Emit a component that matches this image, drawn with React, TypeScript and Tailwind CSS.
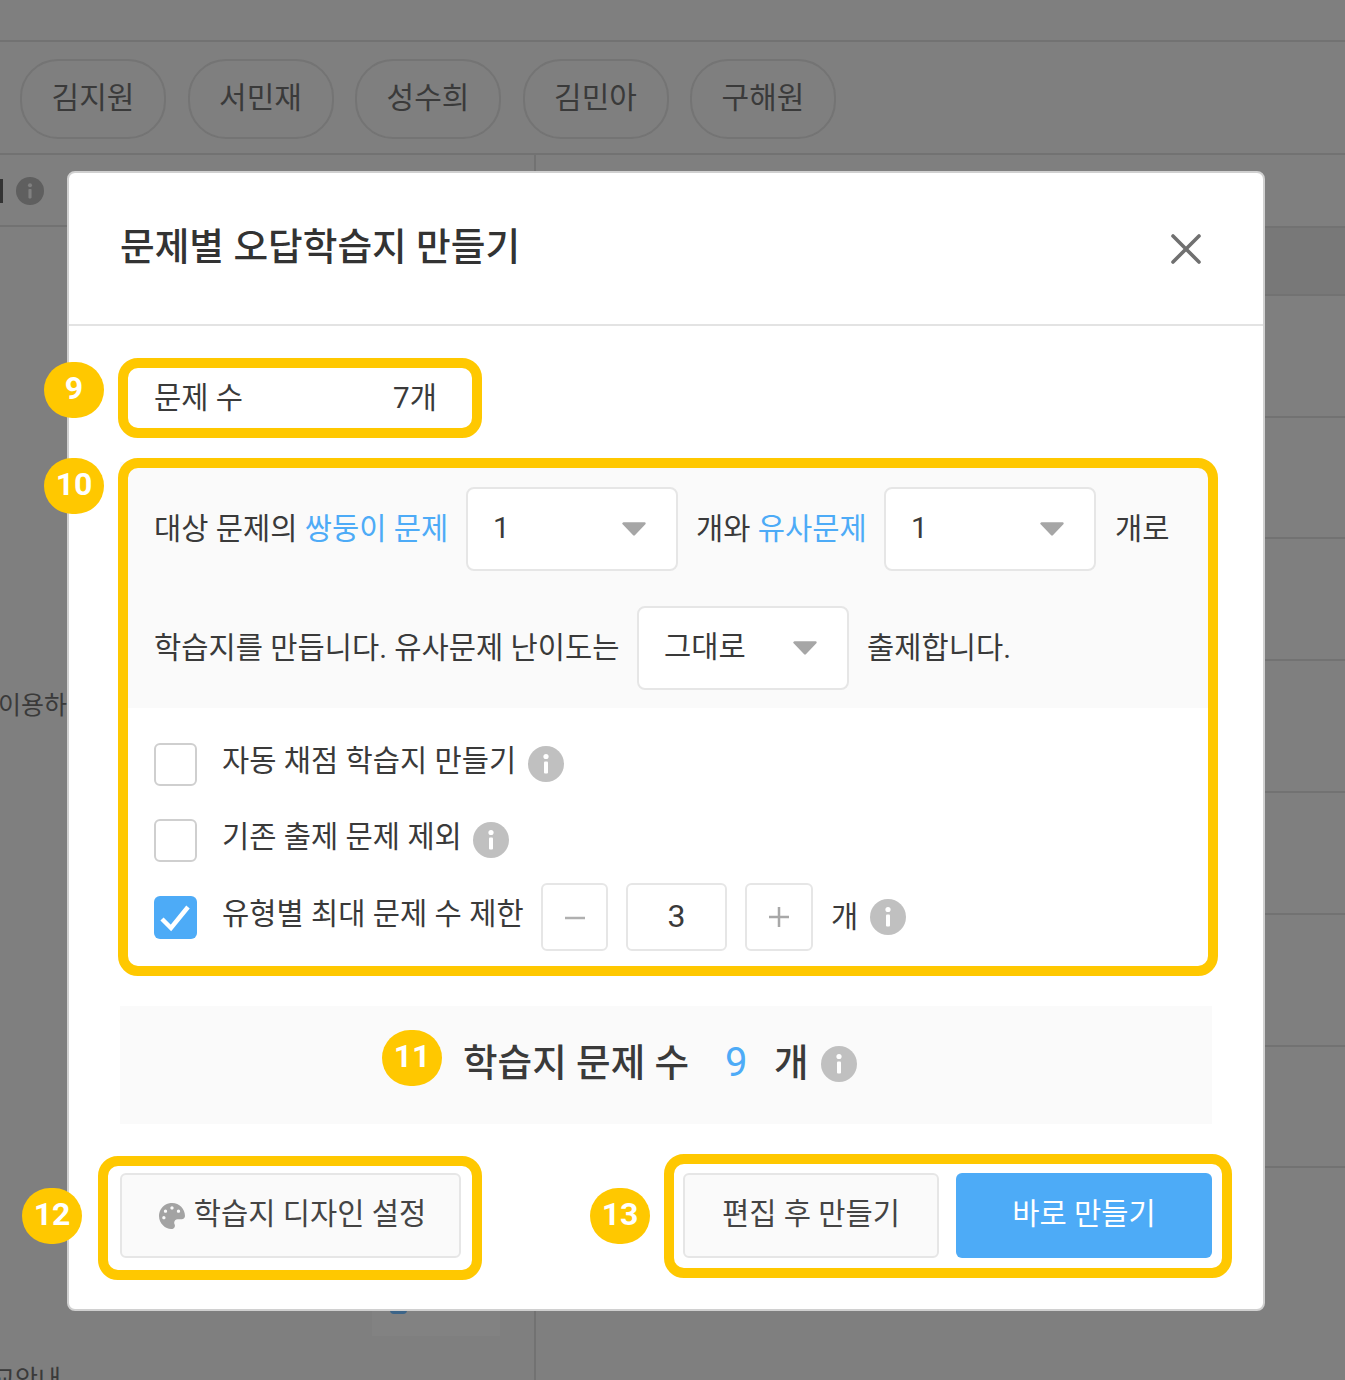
import React from "react";
import { FaPalette } from "react-icons/fa";

const Info = ({ className = "" }: { className?: string }) => (
  <svg viewBox="0 0 36 36" className={`w-[36px] h-[36px] shrink-0 ${className}`}>
    <circle cx="18" cy="18" r="18" fill="#c0c0c0" />
    <circle cx="18" cy="10.5" r="2.6" fill="#fff" />
    <rect x="16" y="15.5" width="4" height="12" rx="1" fill="#fff" />
  </svg>
);

const Caret = () => (
  <svg viewBox="0 0 26 14" className="w-[26px] h-[14px]">
    <path d="M2.5 1.5h21L13 12.5z" fill="#a6a6a6" stroke="#a6a6a6" strokeWidth="2.4" strokeLinejoin="round" />
  </svg>
);

const Select = ({ value }: { value: string }) => (
  <div className="w-[212px] h-[84px] bg-white border-2 border-[#e6e6e6] rounded-[8px] flex items-center justify-between pl-[25px] pr-[29px] text-[#3a3a3a] shrink-0">
    <span className="pb-[2px]">{value}</span>
    <Caret />
  </div>
);

const Check = ({ checked = false }: { checked?: boolean }) =>
  checked ? (
    <div className="w-[43px] h-[43px] rounded-[6px] bg-[#4dabf7] flex items-center justify-center shrink-0">
      <svg viewBox="0 0 43 43" className="w-[43px] h-[43px]">
        <path d="M8 23l9 9L34 11" fill="none" stroke="#fff" strokeWidth="4.5" />
      </svg>
    </div>
  ) : (
    <div className="w-[43px] h-[43px] rounded-[6px] bg-white border-2 border-[#cfcfcf] shrink-0" />
  );

const Badge = ({ n, className }: { n: string; className: string }) => (
  <div className={`absolute w-[60px] h-[56px] rounded-full bg-[#ffc800] text-white text-[32px] font-bold flex items-center justify-center pb-[4px] ${className}`}>
    {n}
  </div>
);

const Frame = ({ className }: { className: string }) => (
  <div className={`absolute border-[10px] border-[#ffc800] rounded-[20px] pointer-events-none ${className}`} />
);

const chips = ["김지원", "서민재", "성수희", "김민아", "구해원"];
const rows = [
  "h-[73px] border-b-2",
  "h-[68px] border-b-2 bg-[#787878]",
  "h-[122px] border-b-2",
  "h-[121px] border-b-2",
  "h-[122px] border-b-2",
  "h-[132px] border-b-2",
  "h-[122px] border-b-2",
  "h-[132px] border-b-2",
  "h-[121px] border-b-2",
];

export default function App() {
  return (
    <div className="relative w-[1345px] h-[1380px] overflow-hidden bg-[#7f7f7f] font-['Roboto','Noto_Sans_CJK_KR',sans-serif] text-[#3a3a3a]">
      {/* dimmed page */}
      <div className="h-[42px] border-b-2 border-[#727272]" />
      <div className="h-[113px] border-b-2 border-[#727272] flex items-start gap-[21.5px] pl-[20px] pt-[17px]">
        {chips.map((c) => (
          <div key={c} className="w-[146px] h-[80px] rounded-[38px] border-2 border-[#747474] flex items-center justify-center pb-[3px] text-[30px] text-[#3a3a3a]">
            {c}
          </div>
        ))}
      </div>
      <div className="flex">
        <div className="w-[536px] h-[1225px] border-r-2 border-[#727272] relative">
          <div className="h-[72px] border-b-2 border-[#727272] flex items-center pt-[2px]">
            <div className="w-[3px] h-[24px] bg-[#333]" />
            <svg viewBox="0 0 36 36" className="w-[28px] h-[28px] ml-[13px]">
              <circle cx="18" cy="18" r="18" fill="#5f5f5f" />
              <circle cx="18" cy="10.5" r="2.6" fill="#808080" />
              <rect x="16" y="15.5" width="4" height="12" rx="1" fill="#808080" />
            </svg>
          </div>
          <div className="mt-[462px] -ml-[2px] text-[25px] text-[#3a3a3a] leading-[34px]">이용하</div>
          <div className="absolute left-[372px] top-[1155px] w-[128px] h-[26px] bg-[#828282]">
            <div className="ml-[18px] w-[17px] h-[4px] rounded-b-full bg-[#3c6488]" />
          </div>
          <div className="absolute left-[-8px] top-[1208px] text-[25px] text-[#3a3a3a] leading-[34px]">교안내</div>
        </div>
        <div className="flex-1">
          {rows.map((r, i) => (
            <div key={i} className={`${r} border-[#727272]`} />
          ))}
        </div>
      </div>

      {/* modal */}
      <div className="absolute left-[67px] top-[171px] w-[1198px] h-[1140px] bg-white rounded-[8px] border-2 border-[#d0d0d0] text-[29.6px]">
        <div className="h-[153px] border-b-2 border-[#e3e3e3] flex items-start justify-between pl-[51px] pr-[61px]">
          <h1 className="text-[37.7px] font-medium text-[#333] mt-[46px] leading-[56px]">문제별 오답학습지 만들기</h1>
          <svg viewBox="0 0 32 32" className="w-[32px] h-[32px] mt-[60px]">
            <path d="M3 3l26 26M29 3L3 29" stroke="#707070" strokeWidth="3.6" strokeLinecap="round" />
          </svg>
        </div>

        <div className="pl-[51px] pr-[51px]">
          <div className="flex h-[136px] items-center pl-[34px] pt-[8px]">
            <span className="w-[239px]">문제 수</span>
            <span>7개</span>
          </div>

          <div className="bg-[#fafafa] pl-[34px] pt-[25px] h-[246px] flex flex-col gap-[35px]">
            <div className="flex items-center h-[84px]">
              <span className="w-[312px]">
                대상 문제의 <span className="text-[#4dabf7]">쌍둥이 문제</span>
              </span>
              <Select value="1" />
              <span className="ml-[18px] w-[188px]">
                개와 <span className="text-[#4dabf7]">유사문제</span>
              </span>
              <Select value="1" />
              <span className="ml-[19px]">개로</span>
            </div>
            <div className="flex items-center h-[84px]">
              <span className="w-[483px]">학습지를 만듭니다. 유사문제 난이도는</span>
              <Select value="그대로" />
              <span className="ml-[18px]">출제합니다.</span>
            </div>
          </div>

          <div className="pl-[34px] pt-[35px] flex flex-col">
            <div className="flex items-center h-[42px] mb-[34px]">
              <Check />
              <span className="ml-[25px] pb-[5px]">자동 채점 학습지 만들기</span>
              <Info className="ml-[12px]" />
            </div>
            <div className="flex items-center h-[42px] mb-[22px]">
              <Check />
              <span className="ml-[25px] pb-[5px]">기존 출제 문제 제외</span>
              <Info className="ml-[11px]" />
            </div>
            <div className="flex items-center h-[68px]">
              <Check checked />
              <span className="ml-[25px] w-[319px] pb-[6px]">유형별 최대 문제 수 제한</span>
              <div className="w-[67px] h-[68px] border-2 border-[#e6e6e6] rounded-[6px] flex items-center justify-center">
                <svg viewBox="0 0 24 24" className="w-[24px] h-[24px]"><path d="M2 13h20" stroke="#b0b0b0" strokeWidth="2.5" /></svg>
              </div>
              <div className="ml-[18px] w-[101px] h-[68px] border-2 border-[#e6e6e6] rounded-[6px] flex items-center justify-center text-[32px] pb-[3px]">3</div>
              <div className="ml-[18px] w-[68px] h-[68px] border-2 border-[#e6e6e6] rounded-[6px] flex items-center justify-center">
                <svg viewBox="0 0 24 24" className="w-[24px] h-[24px]"><path d="M2 12h20M12 2v20" stroke="#a8a8a8" strokeWidth="2.5" /></svg>
              </div>
              <span className="ml-[18px]">개</span>
              <Info className="ml-[12px]" />
            </div>
          </div>

          <div className="mt-[55px] h-[118px] bg-[#fafafa] flex items-center pl-[343px] pb-[4px]">
            <span className="text-[37.6px] font-medium w-[262px]">학습지 문제 수</span>
            <span className="text-[40px] font-normal text-[#4dabf7] w-[49px]">9</span>
            <span className="text-[37.6px] font-medium">개</span>
            <Info className="ml-[12px] mt-[1px]" />
          </div>

          <div className="mt-[49px] flex justify-between">
            <div className="w-[341px] h-[85px] bg-[#fafafa] border-2 border-[#e6e6e6] rounded-[6px] flex items-center justify-center pb-[3px] pl-[4px] text-[#444]">
              <FaPalette className="text-[#a3a3a3] w-[26px] h-[26px] mr-[9px] mt-[3px]" />
              <span>학습지 디자인 설정</span>
            </div>
            <div className="flex gap-[17px]">
              <div className="w-[256px] h-[85px] bg-[#fafafa] border-2 border-[#e6e6e6] rounded-[6px] flex items-center justify-center pb-[3px] text-[#444]">편집 후 만들기</div>
              <div className="w-[256px] h-[85px] bg-[#4dabf7] rounded-[6px] flex items-center justify-center pb-[3px] text-white">바로 만들기</div>
            </div>
          </div>
        </div>
      </div>

      {/* annotations */}
      <Frame className="left-[118px] top-[358px] w-[364px] h-[80px]" />
      <Frame className="left-[118px] top-[458px] w-[1100px] h-[518px]" />
      <Frame className="left-[98px] top-[1156px] w-[384px] h-[124px]" />
      <Frame className="left-[664px] top-[1154px] w-[568px] h-[124px]" />
      <Badge n="9" className="left-[44px] top-[362px]" />
      <Badge n="10" className="left-[44px] top-[458px]" />
      <Badge n="11" className="left-[382px] top-[1030px]" />
      <Badge n="12" className="left-[22px] top-[1188px]" />
      <Badge n="13" className="left-[590px] top-[1188px]" />
    </div>
  );
}
